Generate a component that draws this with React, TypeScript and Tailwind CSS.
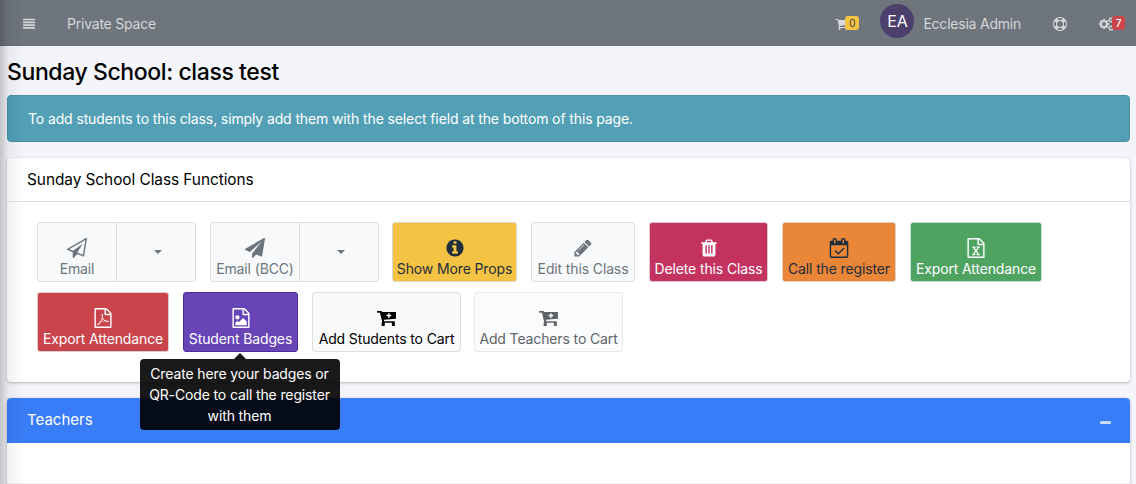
import type { ReactNode } from 'react';

const FILE =
  'M1596 380q28 28 48 76t20 88v1152q0 40-28 68t-68 28h-1344q-40 0-68-28t-28-68v-1600q0-40 28-68t68-28h896q40 0 88 20t76 48zm-444-244v376h376q-10-29-22-41l-313-313q-12-12-41-22zm384 1528v-1024h-416q-40 0-68-28t-28-68v-416h-768v1536h1280z';
const CART_BODY =
  'M704 1536q0 52-38 90t-90 38-90-38-38-90 38-90 90-38 90 38 38 90zm896 0q0 52-38 90t-90 38-90-38-38-90 38-90 90-38 90 38 38 90zm128-1088v512q0 24-16.500 42.500t-40.500 21.500l-1044 122q13 60 13 70 0 16-24 64h920q26 0 45 19t19 45-19 45-45 19h-1024q-26 0-45-19t-19-45q0-11 8-31.500t16-36 21.500-40 15.500-29.500l-177-823h-204q-26 0-45-19t-19-45 19-45 45-19h256q16 0 28.500 6.500t19.500 15.500 13 24.500 8 26 5.500 29.500 4.500 26h1201q26 0 45 19t19 45z';
const SMALL_COG =
  'v140q0 16-149 31-12 27-30 52 51 113 51 138 0 4-4 7-122 71-124 71-8 0-46-47t-52-68q-20 2-30 2t-30-2q-14 21-52 68t-46 47q-2 0-124-71-4-3-4-7 0-25 51-138-18-25-30-52-149-15-149-31v-140q0-16 149-31 13-29 30-52-51-113-51-138 0-4 4-7 4-2 35-20t59-34 30-16q8 0 46 46.500t52 67.500q20-2 30-2t30 2q51-71 92-112l6-2q4 0 124 70 4 3 4 7 0 25-51 138 17 23 30 52 149 15 149 31z';

const ICONS = {
  plane:
    'M1764 11q33 24 27 64l-256 1536q-5 29-32 45-14 8-31 8-11 0-24-5l-453-185-242 295q-18 23-49 23-13 0-22-4-19-7-30.500-23.500t-11.500-36.500v-349l864-1059-1069 925-395-162q-37-14-40-55-2-40 32-59l1664-960q15-9 32-9 20 0 36 11z',
  planeOutline:
    'M1764 11q33 24 27 64l-256 1536q-5 29-32 45-14 8-31 8-11 0-24-5l-527-215-298 327q-18 21-47 21-14 0-23-4-19-7-30-23.500t-11-36.500v-452l-472-193q-37-14-40-55-3-39 32-59l1664-960q35-21 68 2zm-342 1499l221-1323-1434 827 336 137 863-639-478 797z',
  info: 'M1152 1376v-160q0-14-9-23t-23-9h-96v-512q0-14-9-23t-23-9h-320q-14 0-23 9t-9 23v160q0 14 9 23t23 9h96v320h-96q-14 0-23 9t-9 23v160q0 14 9 23t23 9h448q14 0 23-9t9-23zm-128-896v-160q0-14-9-23t-23-9h-192q-14 0-23 9t-9 23v160q0 14 9 23t23 9h192q14 0 23-9t9-23zm640 416q0 209-103 385.500t-279.500 279.500-385.500 103-385.500-103-279.500-279.500-103-385.500 103-385.500 279.500-279.500 385.500-103 385.500 103 279.500 279.500 103 385.500z',
  pencil:
    'M491 1536l91-91-235-235-91 91v107h128v128h107zm523-928q0-22-22-22-10 0-17 7l-542 542q-7 7-7 17 0 22 22 22 10 0 17-7l542-542q7-7 7-17zm-54-192l416 416-832 832h-416v-416zm683 96q0 53-37 90l-166 166-416-416 166-165q36-38 90-38 53 0 91 38l235 234q37 39 37 91z',
  trash:
    'M704 1376v-704q0-14-9-23t-23-9h-64q-14 0-23 9t-9 23v704q0 14 9 23t23 9h64q14 0 23-9t9-23zm256 0v-704q0-14-9-23t-23-9h-64q-14 0-23 9t-9 23v704q0 14 9 23t23 9h64q14 0 23-9t9-23zm256 0v-704q0-14-9-23t-23-9h-64q-14 0-23 9t-9 23v704q0 14 9 23t23 9h64q14 0 23-9t9-23zm-544-992h448l-48-117q-7-9-17-11h-317q-10 2-17 11zm928 32v64q0 14-9 23t-23 9h-96v948q0 83-47 143.500t-113 60.500h-832q-66 0-113-58.500t-47-141.500v-952h-96q-14 0-23-9t-9-23v-64q0-14 9-23t23-9h309l70-167q15-37 54-63t79-26h320q40 0 79 26t54 63l70 167h309q14 0 23 9t9 23z',
  calendar:
    'M1367 964l-512 512q-10 9-23 9t-23-9l-288-288q-9-10-9-23t9-22l46-46q9-9 22-9t23 9l220 220 444-444q10-9 23-9t22 9l46 46q9 9 9 22t-9 23zm-1175 700h1408v-1024h-1408v1024zm384-1216v-288q0-14-9-23t-23-9h-64q-14 0-23 9t-9 23v288q0 14 9 23t23 9h64q14 0 23-9t9-23zm768 0v-288q0-14-9-23t-23-9h-64q-14 0-23 9t-9 23v288q0 14 9 23t23 9h64q14 0 23-9t9-23zm384-64v1280q0 52-38 90t-90 38h-1408q-52 0-90-38t-38-90v-1280q0-52 38-90t90-38h128v-96q0-66 47-113t113-47h64q66 0 113 47t47 113v96h384v-96q0-66 47-113t113-47h64q66 0 113 47t47 113v96h128q52 0 90 38t38 90z',
  excel:
    FILE +
    'm-979-234v106h281v-106h-75l103-161q5-7 10-16.500t7.500-13.500 3.500-4h2q1 4 5 10 2 4 4.500 7.500t6 8 6.500 8.500l107 161h-76v106h291v-106h-68l-192-273 195-282h67v-107h-279v107h74l-103 159q-4 7-10 16.500t-9 13.500l-2 3h-2q-1-4-5-10-6-11-17-23l-106-159h76v-107h-290v107h68l189 272-194 283h-68z',
  pdf:
    FILE +
    'm-514-593q33 26 84 56 59-7 117-7 147 0 177 49 16 22 2 52 0 1-1 2l-2 2v1q-6 38-71 38-48 0-115-20t-130-53q-221 24-392 83-153 262-242 262-15 0-28-7l-24-12q-1-1-6-5-10-10-6-36 9-40 56-91.500t132-96.500q14-9 23 6 2 2 2 4 52-85 107-197 68-136 104-262-24-82-30.500-159.500t6.500-127.500q11-40 42-40h22q23 0 35 15 18 21 9 68-2 6-4 8 1 3 1 8v30q-2 123-14 192 55 164 146 238zm-576 411q52-24 137-158-51 40-87.500 84t-49.500 74zm398-920q-15 42-2 132 1-7 7-44 0-3 7-43 1-4 4-8-1-1-1-2t-1-2-1-2-1-3q-1-22-13-36 0 1-1 2v2zm-124 661q135-54 284-81-2-1-13-9.500t-16-13.500q-76-67-127-176-27 86-83 197-30 56-45 83zm646-16q-24-24-140-24 76 28 124 28 14 0 18-1 0-1-2-3z',
  image:
    FILE +
    'm-128-448v320h-1024v-192l192-192 128 128 384-384zm-832-192q-80 0-136-56t-56-136 56-136 136-56 136 56 56 136-56 136-136 56z',
  cart: CART_BODY,
  cartPlus:
    'M0 270h420l35 90h1245v610l-1080 85 25 135h950v420h-260v-290h-640v290h-280v-240l45-150-200-800h-240zM1000 460v150h-150v130h150v150h130v-150h150v-130h-150v-150z',
  ring: 'M896 0q182 0 348 71t286 191 191 286 71 348-71 348-191 286-286 191-348 71-348-71-286-191-191-286-71-348 71-348 191-286 286-191 348-71zm0 128q-190 0-361 90l194 194q82-28 167-28t167 28l194-194q-171-90-361-90zm-678 1129l194-194q-28-82-28-167t28-167l-194-194q-90 171-90 361t90 361zm678 407q190 0 361-90l-194-194q-82 28-167 28t-167-28l-194 194q171 90 361 90zm0-384q159 0 271.500-112.500t112.500-271.500-112.500-271.500-271.500-112.500-271.500 112.500-112.500 271.500 112.500 271.500 271.500 112.500zm484-217l194 194q90-171 90-361t-90-361l-194 194q28 82 28 167t-28 167z',
  cogs:
    'M896 896q0-106-75-181t-181-75-181 75-75 181 75 181 181 75 181-75 75-181zm768 512q0-52-38-90t-90-38-90 38-38 90q0 53 37.500 90.500t90.500 37.500 90.500-37.500 37.500-90.500zm0-1024q0-52-38-90t-90-38-90 38-38 90q0 53 37.500 90.500t90.500 37.500 90.500-37.500 37.500-90.500zm-384 421v185q0 10-7 19.500t-16 10.500l-155 24q-11 35-32 76 34 48 90 115 7 11 7 20 0 12-7 19-23 30-82.500 89.500t-78.500 59.500q-11 0-21-7l-115-90q-37 19-77 31-11 108-23 155-7 24-30 24h-186q-11 0-20-7.500t-10-17.500l-23-153q-34-10-75-31l-118 89q-7 7-20 7-11 0-21-8-144-133-144-160 0-9 7-19 10-14 41-53t47-61q-23-44-35-82l-152-24q-10-1-17-9.500t-7-19.500v-185q0-10 7-19.500t16-10.500l155-24q11-35 32-76-34-48-90-115-7-11-7-20 0-12 7-20 22-30 82-89t79-59q11 0 21 7l115 90q34-18 77-32 11-108 23-154 7-24 30-24h186q11 0 20 7.500t10 17.500l23 153q34 10 75 31l118-89q8-7 20-7 11 0 21 8 144 133 144 160 0 8-7 19-12 16-42 54t-45 60q23 48 34 82l152 23q10 2 17 10.500t7 19.500z' +
    'm640 533' +
    SMALL_COG +
    'm0-1024' +
    SMALL_COG,
  justify:
    'M64 1344h1664q64 0 64 64v128q0 64-64 64h-1664q-64 0-64-64v-128q0-64 64-64zM64 928h1664q64 0 64 64v128q0 64-64 64h-1664q-64 0-64-64v-128q0-64 64-64zM64 512h1664q64 0 64 64v128q0 64-64 64h-1664q-64 0-64-64v-128q0-64 64-64zM64 96h1664q64 0 64 64v128q0 64-64 64h-1664q-64 0-64-64v-128q0-64 64-64z',
};

type IconName = keyof typeof ICONS;

function Icon({ name, className }: { name: IconName; className: string }) {
  return (
    <svg viewBox={name === 'cogs' ? '0 0 1920 1792' : '0 0 1792 1792'} fill="currentColor" className={`shrink-0 ${className}`}>
      <path d={ICONS[name]} fillRule={name === 'cartPlus' ? 'evenodd' : 'nonzero'} />
    </svg>
  );
}

function ActionButton({ icon, label, className, children }: { icon: IconName; label: string; className: string; children?: ReactNode }) {
  return (
    <button
      className={`relative flex h-[60px] shrink-0 flex-col items-center rounded-[3px] border pt-[15px] text-[14px] leading-[21px] tracking-[-0.13px] whitespace-nowrap ${className}`}
    >
      <Icon name={icon} className="size-[20px]" />
      <span>{label}</span>
      {children}
    </button>
  );
}

function SplitButton({ icon, label, main, toggle }: { icon: IconName; label: string; main: string; toggle: string }) {
  return (
    <div className="flex shrink-0">
      <ActionButton icon={icon} label={label} className={`rounded-r-none border-[#dcdee0] bg-[#f8f9fa] text-[#6c757d] ${main}`} />
      <button
        className={`-ml-px flex h-[60px] items-center justify-center rounded-r-[3px] border border-[#dcdee0] bg-[#f8f9fa] pl-[3px] text-[#6c757d] ${toggle}`}
      >
        <span className="border-x-4 border-t-4 border-x-transparent border-t-current" />
      </button>
    </div>
  );
}

export default function App() {
  return (
    <div className="relative h-[484px] w-full overflow-hidden bg-[#f4f5fa] font-['Inter',sans-serif] text-black">
      <header className="flex h-[46px] items-center border-b border-[#666d75] bg-[#6e757d] pt-[2px] text-[14px] tracking-[-0.22px] text-[#d5d7d9]">
        <Icon name="justify" className="ml-[23px] size-[12px]" />
        <span className="ml-[32px]">Private Space</span>
        <div className="ml-auto flex items-center">
          <div className="flex items-center">
            <Icon name="cart" className="size-[14px]" />
            <span className="-mt-px -ml-[4px] flex h-[14px] w-[14px] items-center justify-center rounded-[3px] bg-[#f5c344] text-[10px] text-[#343a40]">
              0
            </span>
          </div>
          <div className="mb-[5px] ml-[21px] flex size-[34px] items-center justify-center rounded-full bg-[#4b3f6b] text-[16px] text-white">
            EA
          </div>
          <span className="ml-[9px]">Ecclesia Admin</span>
          <Icon name="ring" className="ml-[32px] size-[14px]" />
          <div className="mr-[11px] ml-[32px] flex items-center">
            <Icon name="cogs" className="h-[14px] w-[15px]" />
            <span className="-mt-px -ml-[2px] flex h-[14px] w-[13px] items-center justify-center rounded-[3px] bg-[#cb444a] text-[10px] font-medium text-white">
              7
            </span>
          </div>
        </div>
      </header>

      <main className="pr-[6px] pl-[7px]">
        <h1 className="pt-[11px] text-[23px] leading-[30px] font-medium tracking-[-0.4px]">Sunday School: class test</h1>
        <div className="mt-[8px] flex h-[47px] items-center rounded-[4px] border border-[#4792a6] bg-[#529fb6] pl-[20px] text-[14px] tracking-[-0.12px] text-white">
          To add students to this class, simply add them with the select field at the bottom of this page.
        </div>

        <section className="mt-[16px] h-[224px] rounded-[4px] bg-white shadow-[0_0_1px_rgba(0,0,0,0.15),0_1px_3px_rgba(0,0,0,0.25)]">
          <h2 className="flex h-[44px] items-center border-b border-[#dedfe0] pt-px pl-[20px] text-[15.4px] tracking-[-0.05px]">
            Sunday School Class Functions
          </h2>
          <div className="flex flex-col gap-[10px] pt-[20px] pl-[30px]">
            <div className="flex gap-[14px]">
              <SplitButton icon="planeOutline" label="Email" main="w-[80px]" toggle="w-[80px]" />
              <SplitButton icon="plane" label="Email (BCC)" main="w-[90px]" toggle="w-[80px]" />
              <ActionButton icon="info" label="Show More Props" className="-ml-px w-[125px] border-[#d9d9d4] bg-[#f5c344] text-[#1f2d3d]" />
              <ActionButton icon="pencil" label="Edit this Class" className="w-[104px] border-[#dcdee0] bg-[#f8f9fa] text-[#6c757d]" />
              <ActionButton icon="trash" label="Delete this Class" className="w-[119px] border-[#ddc5cf] bg-[#c43360] text-white" />
              <ActionButton icon="calendar" label="Call the register" className="w-[114px] border-[#dfd2c5] bg-[#ea8637] text-[#1f2d3d]" />
              <ActionButton icon="excel" label="Export Attendance" className="w-[132px] border-[#cbdccf] bg-[#4fa360] text-white" />
            </div>
            <div className="flex gap-[14px]">
              <ActionButton icon="pdf" label="Export Attendance" className="w-[132px] border-[#dfcccd] bg-[#ca444b] text-white" />
              <ActionButton icon="image" label="Student Badges" className="w-[115px] border-[#4f2a9c] bg-[#6845b7] text-white">
                <span className="absolute top-[60px] left-[calc(50%-1px)] z-10 flex -translate-x-1/2 flex-col items-center">
                  <span className="border-x-[6px] border-b-[6px] border-x-transparent border-b-black/90" />
                  <span className="h-[71px] w-[200px] rounded-[4px] bg-black/90 pt-[4px] text-center text-[14px] leading-[21px] text-white">
                    Create here your badges or
                    <br />
                    QR-Code to call the register
                    <br />
                    with them
                  </span>
                </span>
              </ActionButton>
              <ActionButton icon="cartPlus" label="Add Students to Cart" className="w-[149px] border-[#dcdee0] bg-[#f8f9fa] text-black" />
              <ActionButton icon="cartPlus" label="Add Teachers to Cart" className="-ml-px w-[149px] border-[#e7e8ea] bg-[#fafbfc] text-[#606366]" />
            </div>
          </div>
        </section>

        <section className="mt-[16px] h-[120px] rounded-[4px] bg-white shadow-[0_0_1px_rgba(0,0,0,0.15),0_1px_3px_rgba(0,0,0,0.25)]">
          <div className="flex h-[45px] items-center justify-between rounded-t-[4px] bg-[#397cf7] pr-[19px] pl-[20px] text-[15px] text-white">
            <span>Teachers</span>
            <span className="mt-[4px] h-[3px] w-[11px] rounded-[1px] bg-[#cbdcfd]" />
          </div>
          <div className="h-[41px] border-b border-[#ececee]" />
        </section>
      </main>
      <div className="pointer-events-none absolute inset-y-0 left-0 w-[24px] bg-linear-to-r from-black/20 via-black/5 via-35% to-transparent" />
    </div>
  );
}
